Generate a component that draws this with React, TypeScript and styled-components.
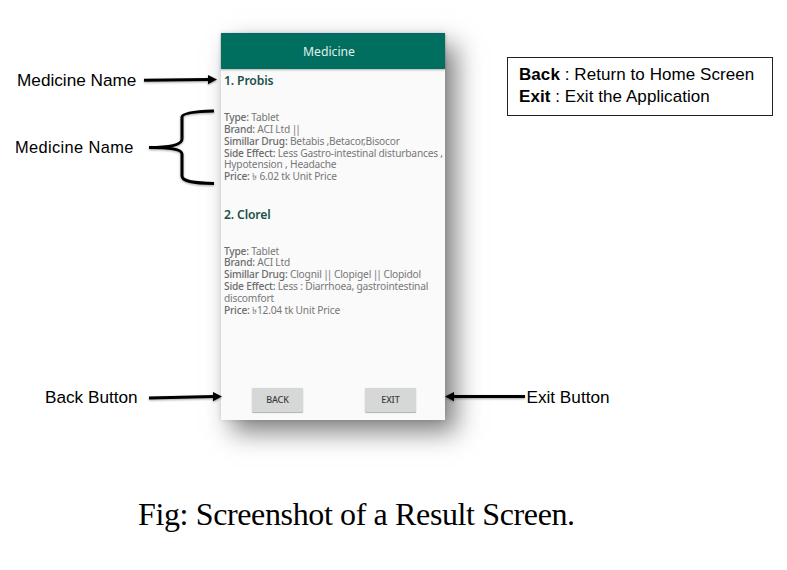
import React from "react";
import styled, { createGlobalStyle } from "styled-components";

const GlobalStyle = createGlobalStyle`
  * { box-sizing: border-box; }
  body { margin: 0; background: #fff; overflow: hidden; }
`;

const Page = styled.main`
  width: 787px;
  height: 570px;
  background: #fff;
  color: #000;
  font-family: "Liberation Sans", Arial, sans-serif;
`;

const Figure = styled.div`
  display: grid;
  grid-template-columns: 221px 224px 342px;
  height: 480px;
  padding-top: 33px;
`;

const Side = styled.div`
  display: flex;
  flex-direction: column;
  position: relative;
  z-index: 1;
`;

const Callout = styled.div<{ $top: number; $height: number; $left?: number }>`
  display: flex;
  align-items: center;
  height: ${(p) => p.$height}px;
  margin-top: ${(p) => p.$top}px;
  padding-left: ${(p) => p.$left ?? 0}px;
`;

const Label = styled.span<{ $width?: number; $size?: number; $spacing?: number }>`
  flex: none;
  width: ${(p) => (p.$width ? `${p.$width}px` : "auto")};
  font-size: ${(p) => p.$size ?? 17.2}px;
  letter-spacing: ${(p) => p.$spacing ?? 0}px;
  line-height: 20px;
  white-space: nowrap;
`;

const Drawing = styled.svg`
  flex: none;
  display: block;
  overflow: visible;
  filter: drop-shadow(0 1.5px 1px rgba(0, 0, 0, 0.35));
`;

const Phone = styled.section`
  display: flex;
  flex-direction: column;
  height: 387px;
  background: #fafafa;
  box-shadow: 11px 12px 24px rgba(0, 0, 0, 0.5), 0 0 5px rgba(0, 0, 0, 0.12);
  font-family: "Noto Sans", sans-serif;
`;

const AppBar = styled.header`
  flex: none;
  height: 36px;
  padding-right: 8px;
  border-top: 1px solid #08617a;
  background: #006f5f;
  box-shadow: 0 1px 2px rgba(0, 0, 0, 0.3);
  color: #e2f0ed;
  font-size: 12.2px;
  line-height: 36px;
  text-align: center;
`;

const Entry = styled.article`
  height: 133.5px;
  padding: 3px 0 0 3px;
`;

const Name = styled.h2`
  margin: 0 0 23px;
  color: #20504a;
  font-size: 12.2px;
  font-weight: 600;
  line-height: 17px;
  letter-spacing: -0.15px;
`;

const Detail = styled.p`
  margin: 0;
  color: #777;
  font-size: 10.2px;
  line-height: 11.85px;
  letter-spacing: -0.2px;
  white-space: nowrap;

  b { color: #6c6c6c; font-weight: 500; }
`;

const Bars = styled.span`
  margin: 0 -0.3px 0 -0.8px;
  letter-spacing: -2.1px;

  &::after { content: ""; margin-right: 1.5px; }
`;

const Actions = styled.div`
  display: flex;
  justify-content: space-between;
  margin-top: auto;
  padding: 0 29px 8px 31px;
`;

const Button = styled.button`
  width: 51px;
  height: 24px;
  padding: 0;
  border: 0;
  border-radius: 1px;
  background: #d6d7d7;
  box-shadow: 0 1px 1px rgba(0, 0, 0, 0.28), 0 0 1px rgba(0, 0, 0, 0.2);
  color: #3c3c3c;
  font: 500 9px/24px "Noto Sans", sans-serif;
  letter-spacing: -0.1px;
`;

const KeyBox = styled.div`
  width: 266px;
  height: 59px;
  margin: 24px 0 0 62px;
  padding: 6px 0 0 11px;
  border: 1.5px solid #222;
  background: #fff;
  font-size: 17px;
  line-height: 22px;
  letter-spacing: 0.07px;
  white-space: nowrap;
`;

const Caption = styled.p`
  margin: 0;
  padding: 16px 0 0 138px;
  font: 32px/37px "Liberation Serif", "Times New Roman", serif;
  letter-spacing: -0.37px;
  white-space: nowrap;
`;

function Arrow({ width, rise = 0, left = false }: { width: number; rise?: number; left?: boolean }) {
  const start = left ? width : 0;
  const tip = left ? 0 : width;
  const neck = left ? 8 : width - 8;
  return (
    <Drawing width={width} height={10} viewBox={`0 0 ${width} 10`}>
      <path d={`M${start} ${4.6 + rise}L${neck} 4.6`} stroke="#000" strokeWidth="3" />
      <path d={`M${tip} 4.6L${left ? 9 : width - 9} 0V9.2Z`} />
    </Drawing>
  );
}

export default function App() {
  return (
    <Page>
      <GlobalStyle />
      <Figure>
        <Side>
          <Callout $top={37} $height={20} $left={17}>
            <Label $width={127}>Medicine Name</Label>
            <Arrow width={73} rise={0.7} />
          </Callout>
          <Callout $top={17} $height={80} $left={15}>
            <Label $width={134} $size={16.4} $spacing={0.37}>Medicine Name</Label>
            <Drawing width={65} height={78} viewBox="0 0 65 78" fill="none" stroke="#000" strokeWidth="3">
              <path d="M65 3C48 3.5 33 5 33 9V31C33 37 20 39.5 0 39.5C20 39.5 33 41 33 46V68C33 73 43 75 65 75.5" />
            </Drawing>
          </Callout>
          <Callout $top={200} $height={20} $left={45}>
            <Label $width={104}>Back Button</Label>
            <Arrow width={73} rise={1.3} />
          </Callout>
        </Side>

        <Phone>
          <AppBar>Medicine</AppBar>
          <Entry>
            <Name>1. Probis</Name>
            <Detail><b>Type:</b> Tablet</Detail>
            <Detail><b>Brand:</b> ACI Ltd <Bars>||</Bars></Detail>
            <Detail><b>Simillar Drug:</b> Betabis ,Betacor,Bisocor</Detail>
            <Detail><b>Side Effect:</b> Less Gastro-intestinal disturbances ,</Detail>
            <Detail>Hypotension , Headache</Detail>
            <Detail><b>Price:</b> ৳ 6.02 tk Unit Price</Detail>
          </Entry>
          <Entry>
            <Name>2. Clorel</Name>
            <Detail><b>Type:</b> Tablet</Detail>
            <Detail><b>Brand:</b> ACI Ltd</Detail>
            <Detail><b>Simillar Drug:</b> Clognil <Bars>||</Bars> Clopigel <Bars>||</Bars> Clopidol</Detail>
            <Detail><b>Side Effect:</b> Less : Diarrhoea, gastrointestinal</Detail>
            <Detail>discomfort</Detail>
            <Detail><b>Price:</b> ৳12.04 tk Unit Price</Detail>
          </Entry>
          <Actions>
            <Button>BACK</Button>
            <Button>EXIT</Button>
          </Actions>
        </Phone>

        <Side>
          <KeyBox>
            <div><b>Back</b> : Return to Home Screen</div>
            <div><b>Exit</b> : Exit the Application</div>
          </KeyBox>
          <Callout $top={271} $height={20}>
            <Arrow width={80} left />
            <Label $width={90}>&#8202;Exit Button</Label>
          </Callout>
        </Side>
      </Figure>
      <Caption>Fig: Screenshot of a Result Screen.</Caption>
    </Page>
  );
}
